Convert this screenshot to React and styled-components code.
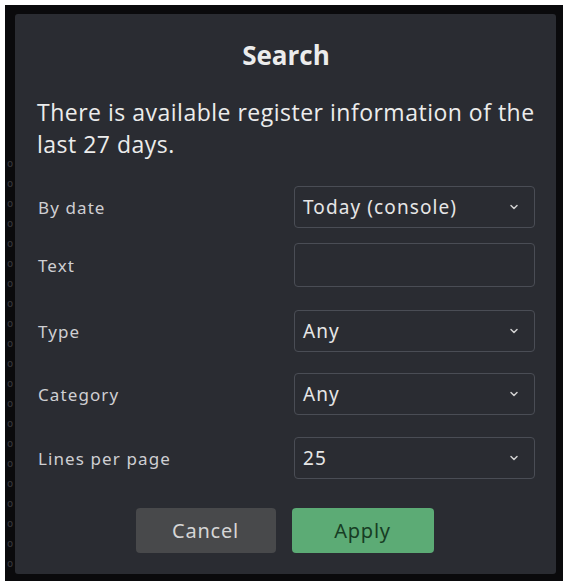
import React from "react";
import styled, { createGlobalStyle } from "styled-components";
import { ChevronDown } from "lucide-react";

const GlobalStyle = createGlobalStyle`
  body {
    margin: 0;
    background: #ffffff;
  }
`;

const Frame = styled.div`
  margin: 5px 0 0 5px;
  width: 558px;
  height: 576px;
  box-sizing: border-box;
  background: #0a0a0c;
  display: flex;
  padding: 9px 7px 7px 0;
`;

const BackLog = styled.div`
  width: 10px;
  overflow: hidden;
  display: flex;
  flex-direction: column;
  align-items: center;
  padding-top: 140px;
  font-family: "DejaVu Sans", sans-serif;
  font-size: 10px;
  line-height: 20px;
  color: #3a3b40;
`;

const Dialog = styled.div`
  flex: 1;
  background: #2a2c32;
  border-radius: 3px;
  box-sizing: border-box;
  padding: 24px 21px 0 22px;
  display: flex;
  flex-direction: column;
  font-family: "Open Sans", "Noto Sans", sans-serif;
  color: #e6e6e6;
`;

const Title = styled.h2`
  margin: 0;
  text-align: center;
  font-size: 26px;
  font-weight: 700;
  line-height: 34px;
  color: #ececec;
`;

const Info = styled.p`
  margin: 24px 0 0;
  font-size: 23px;
  line-height: 32px;
  color: #ececec;
  letter-spacing: 0.5px;
`;

const Form = styled.div`
  display: flex;
  flex-direction: column;
  margin-top: 26px;
`;

const Field = styled.div`
  display: grid;
  grid-template-columns: 257px 241px;
  align-items: center;
  margin-top: ${(p) => p.$space}px;
`;

const Label = styled.span`
  font-family: "Noto Sans", sans-serif;
  font-size: 17px;
  letter-spacing: 1.1px;
  color: #cfcfd2;
  padding-left: 1px;
`;

const Control = styled.div`
  height: ${(p) => p.$h}px;
  box-sizing: border-box;
  border: 1.5px solid #4a4d55;
  border-radius: 4px;
  display: flex;
  align-items: center;
  justify-content: space-between;
  padding: 0 14px 0 8px;
  font-family: "Noto Sans", sans-serif;
  font-size: 19px;
  letter-spacing: 1.1px;
  color: #e6e6e6;
  svg {
    color: #d0d0d0;
  }
`;

const Actions = styled.div`
  display: flex;
  justify-content: center;
  gap: 16px;
  margin-top: 29px;
  padding-right: 3px;
`;

const Button = styled.button`
  width: ${(p) => (p.$primary ? 142 : 140)}px;
  height: 45px;
  border: none;
  border-radius: 4px;
  background: ${(p) => (p.$primary ? "#5cab75" : "#48494b")};
  color: ${(p) => (p.$primary ? "#173d24" : "#d6d6d6")};
  font-family: "Noto Sans", sans-serif;
  font-size: 20px;
  letter-spacing: 0.8px;
`;

const fields = [
  { label: "By date", value: "Today (console)", select: true, space: 0 },
  { label: "Text", value: "", select: false, space: 15, h: 44 },
  { label: "Type", value: "Any", select: true, space: 23 },
  { label: "Category", value: "Any", select: true, space: 21 },
  { label: "Lines per page", value: "25", select: true, space: 22 },
];

export default function App() {
  return (
    <>
      <GlobalStyle />
      <Frame>
        <BackLog>
          {Array.from({ length: 21 }).map((_, i) => (
            <span key={i}>o</span>
          ))}
        </BackLog>
        <Dialog>
          <Title>Search</Title>
          <Info>
            There is available register information of the last 27 days.
          </Info>
          <Form>
            {fields.map((f) => (
              <Field key={f.label} $space={f.space}>
                <Label>{f.label}</Label>
                <Control $h={f.h || 42}>
                  <span>{f.value}</span>
                  {f.select && <ChevronDown size={12} strokeWidth={3} />}
                </Control>
              </Field>
            ))}
          </Form>
          <Actions>
            <Button>Cancel</Button>
            <Button $primary>Apply</Button>
          </Actions>
        </Dialog>
      </Frame>
    </>
  );
}
